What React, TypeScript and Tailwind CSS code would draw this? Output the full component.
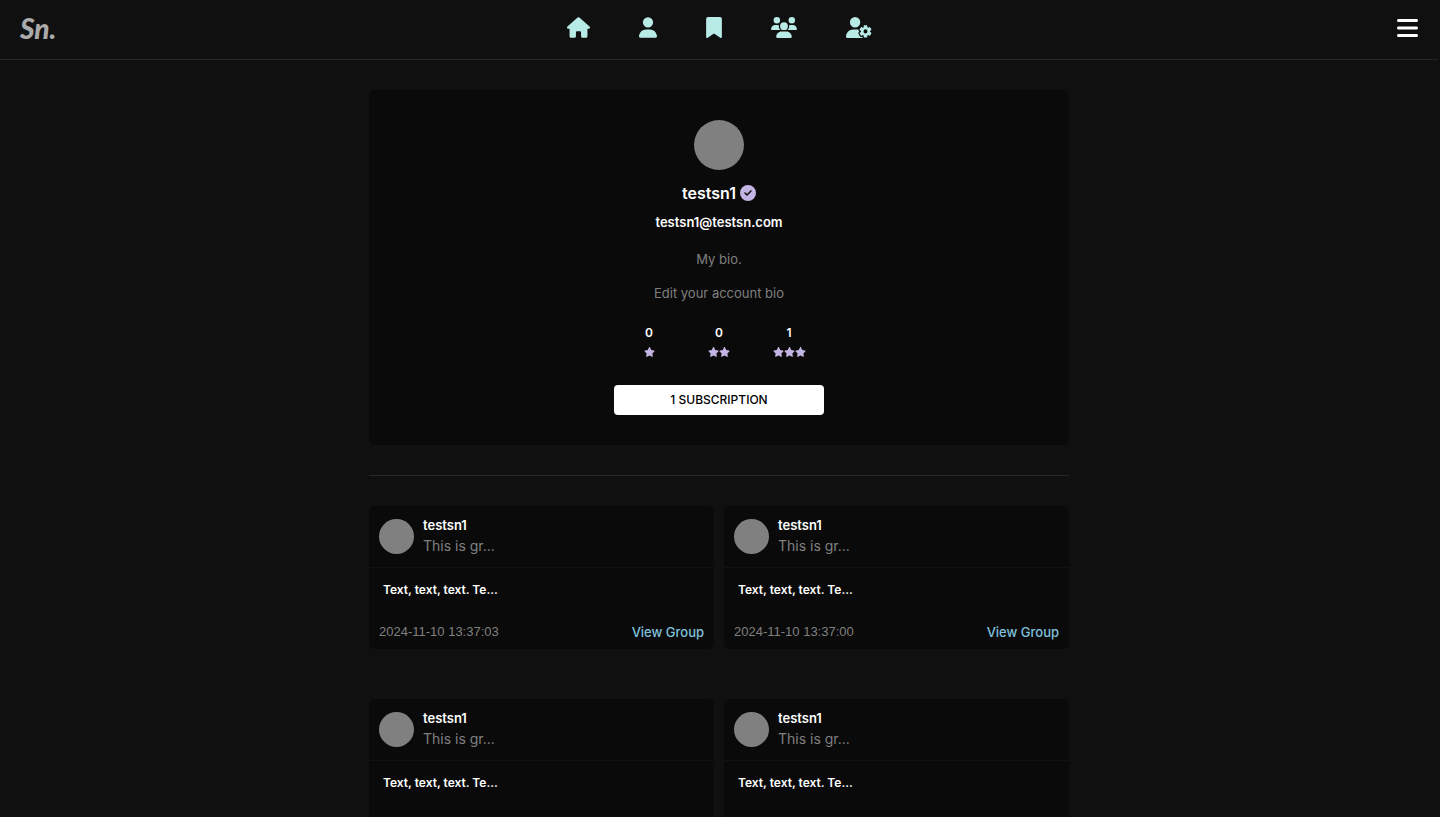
import { FaBars, FaBookmark, FaCircleCheck, FaHouse, FaStar, FaUser, FaUserGear, FaUsers } from "react-icons/fa6";

const NAV_ITEMS = [
  { label: "Home", icon: FaHouse, size: "w-[23px]" },
  { label: "Profile", icon: FaUser, size: "w-[18px]" },
  { label: "Bookmarks", icon: FaBookmark, size: "w-[16px]" },
  { label: "Groups", icon: FaUsers, size: "w-[26px]" },
  { label: "Account settings", icon: FaUserGear, size: "w-[26px]" },
];

const RATINGS = [
  { stars: 1, count: 0 },
  { stars: 2, count: 0 },
  { stars: 3, count: 1 },
];

const POSTS = [
  { id: 1, date: "2024-11-10 13:37:03" },
  { id: 2, date: "2024-11-10 13:37:00" },
  { id: 3, date: "2024-11-10 13:36:57" },
  { id: 4, date: "2024-11-10 13:36:54" },
];

function Header() {
  return (
    <header className="grid h-[60px] shrink-0 grid-cols-[1fr_auto_1fr] items-center border-b border-[#262626] px-5 pb-1">
      <a href="#" className="justify-self-start font-['Lato',sans-serif] text-[28px] leading-8 font-black text-[#aaaaaa] italic">
        Sn.
      </a>
      <nav className="flex items-center gap-[49px]">
        {NAV_ITEMS.map(({ label, icon: Icon, size }) => (
          <a key={label} href="#" aria-label={label} className="text-[#b9ebe6]">
            <Icon className={`h-[21px] ${size}`} />
          </a>
        ))}
      </nav>
      <button type="button" aria-label="Menu" className="justify-self-end text-white">
        <FaBars className="h-6 w-[21px]" />
      </button>
    </header>
  );
}

function Profile() {
  return (
    <section className="flex flex-col items-center rounded-md bg-[#0a0a0a] py-[30px] text-center">
      <div className="size-[50px] rounded-full bg-[#808080]" />
      <h1 className="mt-[11px] flex items-center gap-1 text-base leading-6 font-semibold">
        testsn1
        <FaCircleCheck className="size-4 text-[#c3b5e3]" />
      </h1>
      <p className="mt-[7px] leading-5 font-semibold">testsn1@testsn.com</p>
      <p className="mt-[17px] leading-5 text-[#808080]">My bio.</p>
      <a href="#" className="mt-3.5 leading-5 text-[#808080]">
        Edit your account bio
      </a>
      <div className="mt-5 flex">
        {RATINGS.map(({ stars, count }) => (
          <div key={stars} className="flex w-[70px] flex-col items-center">
            <span className="text-xs leading-5 font-semibold">{count}</span>
            <span className="flex h-[18px] items-center text-[#c3b5e3]">
              {Array.from({ length: stars }, (_, i) => (
                <FaStar key={i} className="h-2.5 w-[11px]" />
              ))}
            </span>
          </div>
        ))}
      </div>
      <button type="button" className="mt-6 h-[30px] w-[210px] rounded bg-white text-xs font-medium text-black">
        1 SUBSCRIPTION
      </button>
    </section>
  );
}

function PostCard({ date }: { date: string }) {
  return (
    <article className="rounded-md bg-[#0a0a0a]">
      <div className="flex h-[62px] items-center gap-[9px] border-b border-[#121212] px-2.5">
        <div className="size-[35px] rounded-full bg-[#808080]" />
        <div className="pb-0.5">
          <h2 className="leading-5 font-semibold">testsn1</h2>
          <p className="text-sm leading-[22px] text-[#808080]">This is gr...</p>
        </div>
      </div>
      <p className="px-3.5 pt-3 text-xs leading-5 font-semibold">Text, text, text. Te...</p>
      <div className="flex items-center justify-between px-2.5 pt-[22px] pb-[7px] leading-5">
        <time className="font-['Liberation_Sans',sans-serif] text-[#808080]">{date}</time>
        <a href="#" className="font-medium text-[#7fc0dc]">
          View Group
        </a>
      </div>
    </article>
  );
}

export default function App() {
  return (
    <div className="h-screen overflow-y-auto bg-[#101010] pr-0.5 font-['Inter',sans-serif] text-[13px] text-white [scrollbar-width:none]">
      <Header />
      <main className="mx-auto max-w-[700px] py-[30px]">
        <Profile />
        <hr className="my-[30px] border-[#262626]" />
        <div className="grid grid-cols-2 gap-x-2.5 gap-y-[50px]">
          {POSTS.map((post) => (
            <PostCard key={post.id} date={post.date} />
          ))}
        </div>
      </main>
    </div>
  );
}
